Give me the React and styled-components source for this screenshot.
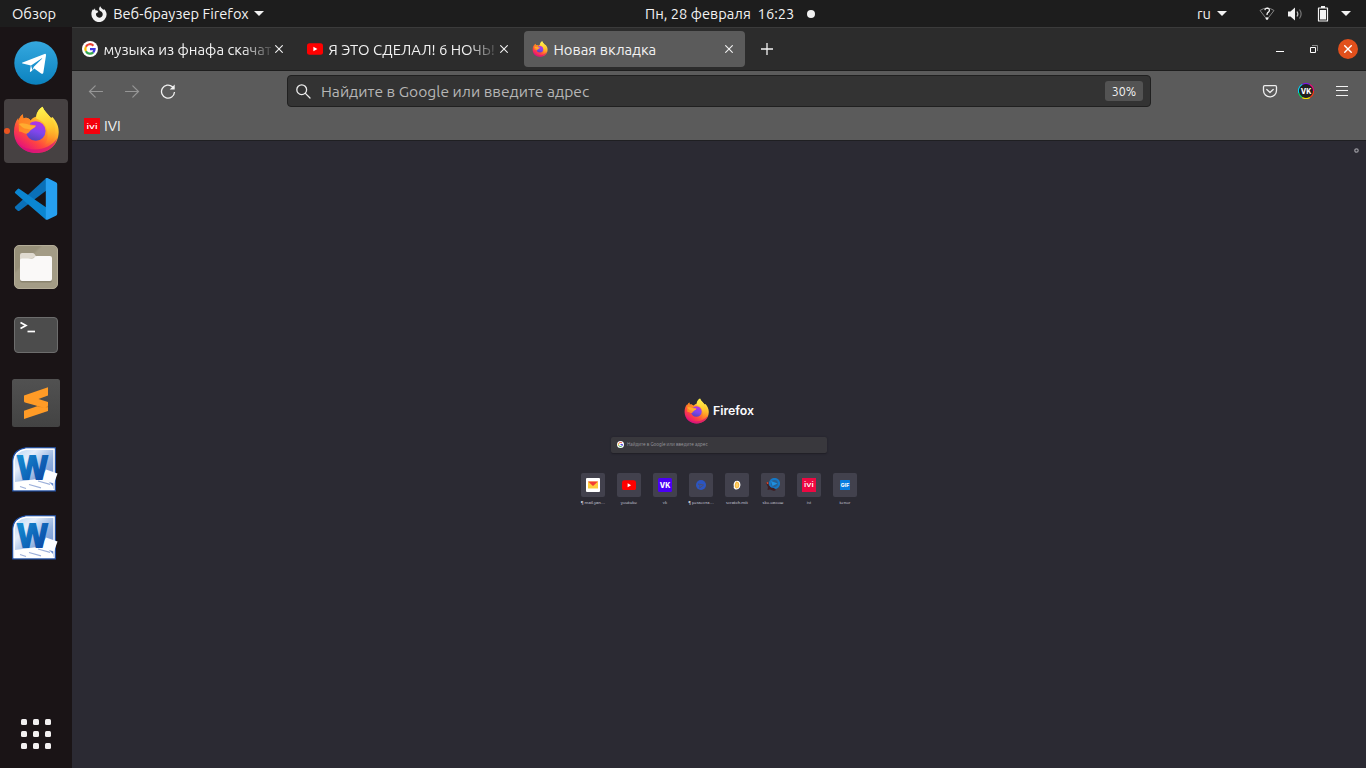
import React from "react";
import styled, { createGlobalStyle } from "styled-components";

const Global = createGlobalStyle`
  * { box-sizing: border-box; }
  html, body { margin: 0; padding: 0; overflow: hidden; }
  body { font-family: Ubuntu, "Noto Sans", "Open Sans", sans-serif; color: #f2f2f2; background: #2b2a33; }
  svg { display: block; flex: none; }
`;

const Screen = styled.div`
  width: 1366px;
  height: 768px;
  display: flex;
  flex-direction: column;
  overflow: hidden;
`;
const Label = styled.span`
  display: block;
  white-space: pre;
  flex: none;
  font-family: ${(p) => p.$font || "inherit"};
  font-size: ${(p) => p.$size || 14.67}px;
  font-weight: ${(p) => p.$weight || 400};
  letter-spacing: ${(p) => p.$track || 0}px;
  color: ${(p) => p.$color || "#f2f2f2"};
  line-height: 20px;
`;

/* ---------- top panel ---------- */
const TopBar = styled.header`
  height: 27px;
  flex: none;
  background: #1d1d1d;
  display: grid;
  grid-template-columns: 645px 1fr auto;
  align-items: center;
`;
const PanelGroup = styled.div`
  display: flex;
  align-items: center;
  height: ${(p) => p.$height || 27}px;
  padding-left: ${(p) => p.$left || 0}px;
  padding-right: ${(p) => p.$right || 0}px;
  gap: ${(p) => p.$gap || 0}px;
`;
const Caret = styled.i`
  width: 0;
  height: 0;
  border: 5px solid transparent;
  border-top-color: #f2f2f2;
  border-bottom: 0;
  margin-left: ${(p) => p.$ml || 0}px;
`;
const NoticeDot = styled.i`
  width: 8px;
  height: 8px;
  border-radius: 50%;
  background: #f2f2f2;
`;

/* ---------- dock ---------- */
const Main = styled.div`
  flex: 1;
  display: flex;
  min-height: 0;
`;
const Dock = styled.nav`
  width: 72px;
  flex: none;
  background: #1a1416;
  display: flex;
  flex-direction: column;
  align-items: center;
  gap: 4px;
  padding: 4px 0 2px;
`;
const DockItem = styled.div`
  width: 64px;
  height: 64px;
  flex: none;
  border-radius: 4px;
  position: relative;
  display: flex;
  align-items: center;
  justify-content: center;
  background: ${(p) => (p.$active ? "#464142" : "transparent")};
  margin-top: ${(p) => (p.$last ? "auto" : 0)};
  padding: ${(p) => p.$pad || 0};
`;
const RunningDot = styled.i`
  position: absolute;
  left: 0;
  top: 29px;
  width: 6px;
  height: 6px;
  border-radius: 50%;
  background: #e95420;
`;
const AppGrid = styled.div`
  display: grid;
  grid-template-columns: repeat(3, 6px);
  gap: 6px;
`;
const AppDot = styled.i`
  height: 6px;
  border-radius: 1.5px;
  background: #f2f0f0;
`;

/* ---------- browser ---------- */
const Browser = styled.main`
  flex: 1;
  min-width: 0;
  display: flex;
  flex-direction: column;
`;
const TabStrip = styled.div`
  height: 44px;
  flex: none;
  background: #2c2c2c;
  border-top: 1px solid #3b3b3b;
  border-bottom: 1px solid #1e1e1e;
  display: flex;
  align-items: center;
  padding: 0 8px 0 2px;
  gap: 4px;
`;
const Tab = styled.div`
  width: 221px;
  height: 36px;
  border-radius: 4px;
  background: ${(p) => (p.$active ? "#5b5b5b" : "transparent")};
  display: flex;
  align-items: center;
  padding: 0 12px 0 8px;
`;
const TabTitle = styled.div`
  width: 167px;
  margin: 1px 0 0 5.5px;
  overflow: hidden;
  ${(p) => p.$fade && "mask-image: linear-gradient(to right, #000 138px, transparent 172px);"}
`;
const TabClose = styled.div`
  flex: 1;
  display: flex;
  justify-content: flex-end;
`;
const NewTab = styled.div`
  width: 36px;
  display: flex;
  justify-content: center;
`;
const WindowControls = styled.div`
  margin-left: auto;
  display: flex;
  align-items: center;
`;
const CloseWindow = styled.div`
  width: 20px;
  height: 20px;
  border-radius: 50%;
  background: #e2501c;
  display: flex;
  align-items: center;
  justify-content: center;
  margin-left: 20px;
`;
const Chrome = styled.div`
  height: 70px;
  flex: none;
  background: #5b5b5b;
  border-bottom: 1px solid #1f1f22;
`;
const NavBar = styled.div`
  height: 40px;
  display: flex;
  align-items: center;
  padding: 0 16px;
`;
const NavButtons = styled.div`
  display: flex;
  gap: 20px;
  width: 199px;
`;
const UrlBar = styled.div`
  width: 864px;
  height: 32px;
  border: 1px solid #202020;
  border-radius: 4px;
  background: #333333;
  display: flex;
  align-items: center;
  padding: 0 7px 0 8px;
`;
const UrlText = styled.div`
  flex: 1;
  padding: 0 0 1px 10px;
`;
const Zoom = styled.div`
  width: 38px;
  height: 20px;
  border-radius: 3px;
  background: #535353;
  display: flex;
  justify-content: center;
`;
const Extensions = styled.div`
  margin-left: auto;
  display: flex;
  align-items: center;
  gap: 20px;
`;
const Bookmarks = styled.div`
  height: 29px;
  display: flex;
  align-items: center;
  padding: 1px 0 0 12px;
  gap: 4px;
`;

/* ---------- new tab page ---------- */
const Page = styled.section`
  flex: 1;
  background: #2b2a33;
  display: flex;
  flex-direction: column;
  align-items: center;
`;
const Settings = styled.div`
  align-self: flex-end;
  height: 257px;
  padding: 7px 7px 0 0;
`;
const Brand = styled.div`
  height: 26px;
  display: flex;
  align-items: center;
  gap: 4px;
`;
const SearchBox = styled.div`
  width: 216px;
  height: 16px;
  margin-top: 13px;
  border-radius: 2px;
  background: #39383d;
  box-shadow: 0 0.5px 1.5px #1f1e26;
  display: flex;
  align-items: center;
  gap: 3px;
  padding: 0 0 1px 6px;
`;
const Sites = styled.div`
  margin-top: 20px;
  display: flex;
`;
const Site = styled.div`
  width: 36px;
  display: flex;
  flex-direction: column;
  align-items: center;
`;
const SiteTile = styled.div`
  width: 24px;
  height: 24px;
  border-radius: 2px;
  background: #42414d;
  display: flex;
  align-items: center;
  justify-content: center;
`;
const SiteName = styled.div`
  margin-top: 3px;
  height: 5px;
  font-size: 4.4px;
  line-height: 5px;
  white-space: pre;
  color: #dcdce0;
`;

/* ---------- icons ---------- */
const Firefox = ({ w = 46, h = 48, id }) => (
  <svg width={w} height={h} viewBox="0 0 46 48">
    <defs>
      <linearGradient id={id + "a"} x1=".85" y1=".1" x2=".25" y2=".95">
        <stop offset="0" stopColor="#fff44f" />
        <stop offset=".28" stopColor="#ffc02f" />
        <stop offset=".48" stopColor="#ff8a26" />
        <stop offset=".72" stopColor="#ff4640" />
        <stop offset="1" stopColor="#e5107c" />
      </linearGradient>
      <linearGradient id={id + "b"} x1=".6" y1="0" x2=".3" y2="1">
        <stop offset="0" stopColor="#b833e1" />
        <stop offset=".5" stopColor="#8146ee" />
        <stop offset="1" stopColor="#5143b8" />
      </linearGradient>
      <linearGradient id={id + "c"} x1=".5" y1="0" x2=".6" y2="1">
        <stop offset="0" stopColor="#fff44f" />
        <stop offset=".55" stopColor="#ffc72d" />
        <stop offset="1" stopColor="#ff8a1e" stopOpacity=".1" />
      </linearGradient>
      <linearGradient id={id + "d"} x1="0" y1="0" x2="1" y2="1">
        <stop offset="0" stopColor="#ff7c20" />
        <stop offset="1" stopColor="#ff962d" />
      </linearGradient>
    </defs>
    <path fill={`url(#${id}a)`} d="M29.500.7C31 5 35 8 38 12l1.500-1c4 4.500 6.200 9 6.200 15C45.500 38.500 36 47 23.300 47S1 38 1 26c0-6 1.500-10.500 4.200-14l.4 2.500c1-3 2.300-4.700 4.200-6.200l.6 4.300C13 11 16 12 17.500 14.500c2-2.700 4-3.600 6-4C24 6 26 3 29.500.7z" />
    <path fill="#d4127c" opacity=".7" d="M2 31c2.500 9 11 12.500 20 12.500S40 39 44 32.500C41.500 42 33.500 47 23.300 47S4.500 41 2 31z" />
    <circle cx="22.800" cy="25" r="9.800" fill={`url(#${id}b)`} />
    <path fill={`url(#${id}c)`} d="M29.500.7C31 5 35 8 38 12c3.500 5 5 10 3.500 16-1.500 5.500-5 9.500-10 11 3-4 4-9 2.500-15-1-5-4-9-10.700-11.500C22.500 7 26 3 29.500.7z" />
    <path fill={`url(#${id}d)`} d="M5.500 14.500c1-3 2.300-4.700 4.200-6.200l.6 4.300c2.700-1.600 5.200-.6 7.200 1.900 0 1.500-.5 3-.5 4 1.500.6 4.500.7 5.800 1-.5 2.300-3.500 2.800-5 4.500-1 1-1.500 2.500-3.800 3.500-2 1-5-2-8-2z" />
    <path fill="#ffac30" d="M6 18c2.500-1.400 7-.5 10.500 1 1.800.7 5 .5 6.300.8-.8 2-3.300 2.500-5 3.900-2.500-1-6-.5-8-2.200C8.500 20.300 7 19.500 6 18z" />
  </svg>
);

const Telegram = () => (
  <svg width="44" height="44" viewBox="0 0 44 44">
    <defs>
      <linearGradient id="tg" x1="0" y1="0" x2="0" y2="1">
        <stop offset="0" stopColor="#35a8df" />
        <stop offset="1" stopColor="#0b82bf" />
      </linearGradient>
    </defs>
    <circle cx="22" cy="22" r="21.700" fill="url(#tg)" />
    <path fill="#fff" d="M8.600 21.500 30.500 13q1.800-.6 1.500 1.500l-2.600 16.800c-.2 1.600-1.200 1.900-2.300 1.100l-6.800-5-3.200 3.100c-.8.800-1.400.6-1.200-.6l1-5.300-8.200-2.200c-1-.3-1-.7-.1-.9z" />
    <path fill="#1a92cf" d="m17 24.600 10.500-7.200c.6-.4 1-.1.500.4l-8.200 8-1.300 3.500z" />
  </svg>
);

const VSCode = () => (
  <svg width="44" height="44" viewBox="0 0 44 44">
    <path fill="#0a70b8" d="M1.300 29.500 32 1.200 33 13 5.500 33.700q-1 .6-1.800 0L1.300 31.500q-1-1 0-2z" />
    <path fill="#0b86d1" d="M1.300 14.500 3.700 12q.9-.8 1.800 0L33 31l-1 11.700L1.300 16.300q-1-.9 0-1.800z" />
    <path fill="#26a0f0" d="M31.800 1.300q.7-.6 1.700-.2l8.400 4.200q1.300.6 1.300 2v29.400q0 1.400-1.300 2l-8.400 4q-1 .4-1.700-.2z" />
  </svg>
);

const Files = () => (
  <svg width="44" height="44" viewBox="0 0 44 44">
    <defs>
      <linearGradient id="fl" x1="0" y1="0" x2="1" y2="1">
        <stop offset=".3" stopColor="#979079" />
        <stop offset=".34" stopColor="#a39c86" />
      </linearGradient>
    </defs>
    <rect x=".5" y=".5" width="43" height="43" rx="4.500" fill="url(#fl)" stroke="#b4ad98" />
    <path fill="#6f6956" opacity=".5" d="M6 16h32v19.500q0 2-2 2H8q-2 0-2-2z" />
    <path fill="#dfdad0" d="M6 16v-6q0-2 2-2h10.500q1.200 0 2 1l2 3z" />
    <path fill="#faf9f8" d="M6 15q0-1.500 2-1.500h9.500q2 0 3-1.300.8-1.200 2.500-1.200h13q2 0 2 2v21q0 2-2 2H8q-2 0-2-2z" />
  </svg>
);

const Terminal = () => (
  <svg width="44" height="36" viewBox="0 0 44 36">
    <rect x=".5" y=".5" width="43" height="35" rx="3.500" fill="#4c4c4c" stroke="#6d6d6d" />
    <path d="m6.500 5.500 5.500 3-5.500 3" fill="none" stroke="#fff" strokeWidth="1.700" />
    <path d="M13.500 14.500H21" stroke="#fff" strokeWidth="1.700" />
  </svg>
);

const Sublime = () => (
  <svg width="48" height="48" viewBox="0 0 48 48">
    <defs>
      <linearGradient id="sb" x1="0" y1="0" x2="0" y2="1">
        <stop offset="0" stopColor="#515151" />
        <stop offset="1" stopColor="#434343" />
      </linearGradient>
    </defs>
    <rect width="48" height="48" rx="2.500" fill="url(#sb)" />
    <path fill="#ff9b26" d="m12 31.800 24-8.300V32l-24 8z" />
    <path fill="#e0821b" d="m20 21 16 4v3.500l-10-.5z" />
    <path fill="#ff9b26" d="M12 16.500 36 8.300v8.200L26.500 20l9.500 3v3.500l-3 2.500-20-5.500q-1-.3-1-1.500z" />
  </svg>
);

const Word = ({ id }) => (
  <svg width="46" height="46" viewBox="0 0 46 46">
    <defs>
      <linearGradient id={id + "p"} x1="0" y1="0" x2="1" y2="1">
        <stop offset="0" stopColor="#b4d2f2" />
        <stop offset=".3" stopColor="#e4eefb" />
        <stop offset=".6" stopColor="#8eaede" />
        <stop offset="1" stopColor="#5b80cc" />
      </linearGradient>
      <linearGradient id={id + "w"} x1="0" y1="0" x2="1" y2="1">
        <stop offset="0" stopColor="#1597d8" />
        <stop offset="1" stopColor="#0a3a9d" />
      </linearGradient>
    </defs>
    <path d="M14 .8h29.300v43H.8V14Q.8 3 14 .8z" fill={`url(#${id}p)`} stroke="#1f50a8" strokeWidth="1.200" />
    <path d="M14 2.200h28v40.300H2.200V14Q3 4 14 2.200z" fill="none" stroke="#fff" strokeWidth="1.400" />
    <path d="m3 35 30-4 8 8v3.500H3z" fill="#fff" />
    <path d="m34 22.500 11.500 4-3.500 10-14-4z" fill="#fbfcff" />
    <path d="m26 34 12 3.300M17 37.500l12 3.300M8 39.500l6 2" stroke="#9db0da" strokeWidth="1.200" />
    <text x="5.500" y="32.300" fontFamily="Liberation Sans, sans-serif" fontWeight="700" fontSize="34" textLength="30" lengthAdjust="spacingAndGlyphs" fill={`url(#${id}w)`} stroke={`url(#${id}w)`} strokeWidth="1.800">W</text>
  </svg>
);

const Google = ({ size = 16 }) => (
  <svg width={size} height={size} viewBox="0 0 16 16">
    <circle cx="8" cy="8" r="8" fill="#fff" />
    <g fill="none" strokeWidth="2.200">
      <path stroke="#ea4335" d="M3.900 5.800a4.600 4.600 0 0 1 7.500-1.100" />
      <path stroke="#fbbc05" d="M3.900 10.200a4.600 4.600 0 0 1 0-4.400" />
      <path stroke="#34a853" d="M11.200 11.400a4.600 4.600 0 0 1-7.300-1.200" />
      <path stroke="#4338e0" d="M8 8.100H12.600a4.600 4.600 0 0 1-1.400 3.300" />
    </g>
  </svg>
);

const YouTube = ({ w = 16, h = 12 }) => (
  <svg width={w} height={h} viewBox="0 0 16 12">
    <rect y=".3" width="16" height="11.400" rx="2.500" fill="#f00" />
    <path d="m6.400 3.700 4 2.300-4 2.300z" fill="#fff" />
  </svg>
);

const Ivi = ({ size = 16, color = "#f4000c" }) => (
  <svg width={size} height={size} viewBox="0 0 16 16">
    <rect width="16" height="16" fill={color} />
    <text x="2.400" y="10.600" fontFamily="Inter, sans-serif" fontWeight="500" fontSize="6.400" textLength="11.200" lengthAdjust="spacingAndGlyphs" fill="#fff">ivi</text>
  </svg>
);

const Cross = ({ w = 1.100, color = "#f2f2f2" }) => (
  <svg width="8" height="8" viewBox="0 0 8 8">
    <path d="M.3.3l7.400 7.400M7.700.3.300 7.700" stroke={color} strokeWidth={w} />
  </svg>
);

const Arrow = ({ flip }) => (
  <svg width="16" height="16" viewBox="0 0 16 16" fill="none" stroke="#969696" strokeWidth="1.200" strokeLinecap="round">
    <path d={flip ? "M1.500 8.500h13M8.800 2.800l5.700 5.700-5.700 5.700" : "M14.500 8.500h-13M7.200 2.800 1.500 8.500l5.700 5.700"} />
  </svg>
);

const DOCK = [
  { icon: <Telegram /> },
  { icon: <Firefox id="fd" />, active: true, pad: "0 0 2px" },
  { icon: <VSCode /> },
  { icon: <Files /> },
  { icon: <Terminal /> },
  { icon: <Sublime /> },
  { icon: <Word id="w1" />, pad: "0 2px 2px 0" },
  { icon: <Word id="w2" />, pad: "0 2px 2px 0" },
];

const TABS = [
  { icon: <Google />, title: "музыка из фнафа скачать", fade: true },
  { icon: <YouTube />, title: "Я ЭТО СДЕЛАЛ! 6 НОЧЬ!", fade: true },
  { icon: <Firefox w={16} h={16} id="ft" />, title: "Новая вкладка", active: true },
];

const SITES = [
  ["¶ mail.yan…", <svg width="14" height="14" viewBox="0 0 14 14"><rect width="14" height="14" rx="1" fill="#fff" /><path fill="#ffcc3d" d="M2 3.500h10v7H2z" /><path fill="#f43c35" d="M2 3.500h10L7 8z" /></svg>],
  ["youtube", <YouTube w={14} h={10.500} />],
  ["vk", <svg width="14" height="14" viewBox="0 0 14 14"><rect width="14" height="14" rx="1.500" fill="#4b00f5" /><text x="1.800" y="9.600" fontFamily="Inter, sans-serif" fontWeight="800" fontSize="7" textLength="10.500" lengthAdjust="spacingAndGlyphs" fill="#fff">VK</text></svg>],
  ["¶ ремонта…", <svg width="10" height="10" viewBox="0 0 10 10"><circle cx="5" cy="5" r="5" fill="#2c55c0" /><path d="m2 4 5.500 1L3.700 8l.2-2.500z" fill="none" stroke="#4a5072" strokeWidth="1" /></svg>],
  ["scratch.mit", <svg width="8" height="10" viewBox="0 0 8 10"><path d="M2.500 1Q6 0 7 2.500q1 2-.2 5Q5 10 2 9.200 0 8 .8 6.500 0 3 2.500 1z" fill="#fff" /><path d="M3.500 2.200q2 0 2.200 2Q6 8 3.500 7.800 1.800 7.500 2.500 4z" fill="#ffd070" stroke="#f5b73a" strokeWidth="1.200" /></svg>],
  ["sko.овсош", <svg width="14" height="14" viewBox="0 0 14 14"><circle cx="8.500" cy="5.500" r="4.500" fill="#2a5f91" stroke="#1577c5" strokeWidth="2.200" /><path d="m5 3 6.500 2.500L6.500 8z" fill="#1e90e0" /><path d="m0 5 2-1 .5 3L5 9.500 8 10l2 2-2 1-4-1.500L1.500 12 2 9z" fill="#3f1f24" /><path d="M.5 4.500 2 4l.5 1.500-1.500.8z" fill="#e04629" /></svg>],
  ["ivi", <Ivi size={14} color="#ed0842" />],
  ["tenor", <svg width="10" height="10" viewBox="0 0 10 10"><rect width="10" height="10" rx=".6" fill="#087de0" /><text x=".8" y="7" fontFamily="Inter, sans-serif" fontWeight="700" fontSize="5.300" textLength="8.400" lengthAdjust="spacingAndGlyphs" fill="#fff">GIF</text></svg>],
];

export default function App() {
  return (
    <Screen>
      <Global />
      <TopBar>
        <PanelGroup $left={12}>
          <Label>Обзор</Label>
          <PanelGroup $left={35} $height={25}>
            <svg width="16" height="16" viewBox="0 0 16 16">
              <path fill="#f2f2f2" d="M9.300.3c.4 1.700 2 2.200 3.200 3.600l.5-.8c1.800 1.700 2.600 3.600 2.600 5.400a7.500 7.500 0 0 1-15.200 0C.3 6 1 4.300 2.200 3l.3 1.200L4 2.200l.3 2 2 .2 1 1.600L5 7.500c-.3 2.400 1.200 4.200 3.200 4.200 2.200 0 3.700-1.700 3.500-3.900-.1-1.400-1.300-2.500-2.500-2.900C7.500 4 8 1.500 9.300.3z" />
            </svg>
          </PanelGroup>
          <PanelGroup $left={6}>
            <Label>Веб-браузер Firefox</Label>
            <Caret $ml={5} />
          </PanelGroup>
        </PanelGroup>
        <PanelGroup $gap={13}>
          <Label $track={0.03}>Пн, 28 февраля  16:23</Label>
          <NoticeDot />
        </PanelGroup>
        <PanelGroup $right={15}>
          <Label>ru</Label>
          <Caret $ml={6} />
          <PanelGroup $left={32} $gap={12}>
            <svg width="16" height="14" viewBox="0 0 16 14" fill="none">
              <path d="M1 3.500Q8-1.500 15 3.500L8 12.500z" stroke="#858585" strokeWidth="1" />
              <path d="M5.800 3.200q.4-2 2.400-2 2.400.2 2.200 2.300-.1 1.300-1.600 2.100Q8 6.300 8 8" stroke="#f2f2f2" strokeWidth="1.300" />
              <circle cx="8" cy="11.500" r="1.300" fill="#f2f2f2" />
            </svg>
            <svg width="16" height="14" viewBox="0 0 16 14" fill="none">
              <path d="M1 4.500h2.500L8 .5v13l-4.500-4H1z" fill="#f2f2f2" />
              <path d="M10 4.500q1.700 2.500 0 5" stroke="#c0c0c0" strokeWidth="1.200" />
              <path d="M12.500 2.500q3.200 4.500 0 9" stroke="#777" strokeWidth="1.200" />
            </svg>
            <svg width="16" height="16" viewBox="0 0 16 16">
              <path d="M3.500 2h9v13h-9z" fill="none" stroke="#f2f2f2" strokeWidth="1.200" strokeLinejoin="round" />
              <path d="M5 4h6v9.500H5zM6 0h4v2H6z" fill="#f2f2f2" />
            </svg>
          </PanelGroup>
          <Caret $ml={10} />
        </PanelGroup>
      </TopBar>
      <Main>
        <Dock>
          {DOCK.map(({ icon, active, pad }, i) => (
            <DockItem key={i} $active={active} $pad={pad}>
              {active && <RunningDot />}
              {icon}
            </DockItem>
          ))}
          <DockItem $last>
            <AppGrid>
              {Array.from({ length: 9 }, (_, i) => <AppDot key={i} />)}
            </AppGrid>
          </DockItem>
        </Dock>
        <Browser>
          <TabStrip>
            {TABS.map((t) => (
              <Tab key={t.title} $active={t.active}>
                {t.icon}
                <TabTitle $fade={t.fade}><Label $size={14.85}>{t.title}</Label></TabTitle>
                <TabClose><Cross /></TabClose>
              </Tab>
            ))}
            <NewTab>
              <svg width="12" height="12" viewBox="0 0 12 12"><path d="M6 0v12M0 6h12" stroke="#f2f2f2" strokeWidth="1.300" /></svg>
            </NewTab>
            <WindowControls>
              <svg width="8" height="8" viewBox="0 0 8 8"><path d="M0 6.500h8" stroke="#fff" /></svg>
              <svg width="34" height="8" viewBox="0 0 34 8" fill="none">
                <path d="M26.500 2.500h5v5h-5z" stroke="#fff" />
                <path d="M28 .5h5.500V6" stroke="#8c8c8c" />
              </svg>
              <CloseWindow><Cross w={1.400} color="#fff" /></CloseWindow>
            </WindowControls>
          </TabStrip>
          <Chrome>
            <NavBar>
              <NavButtons>
                <Arrow />
                <Arrow flip />
                <svg width="16" height="16" viewBox="0 0 16 16" fill="none">
                  <path d="M14.500 9a6.500 6.500 0 1 1-2.100-5.200l1.600 1.500" stroke="#f2f2f2" strokeWidth="1.300" />
                  <path d="M14.700 1.500v5h-5z" fill="#f2f2f2" />
                </svg>
              </NavButtons>
              <UrlBar>
                <svg width="15" height="15" viewBox="0 0 15 15" fill="none" stroke="#ededed" strokeWidth="1.300" strokeLinecap="round">
                  <circle cx="5.700" cy="5.700" r="4.900" />
                  <path d="m9.400 9.400 4.600 4.600" />
                </svg>
                <UrlText><Label $size={15.6} $color="#b6b6b6">Найдите в Google или введите адрес</Label></UrlText>
                <Zoom><Label $size={12.4}>30%</Label></Zoom>
              </UrlBar>
              <Extensions>
                <svg width="16" height="16" viewBox="0 0 16 16" fill="none" stroke="#ededed" strokeWidth="1.300" strokeLinecap="round" strokeLinejoin="round">
                  <path d="M2.700 2.700h10.600q1.200 0 1.200 1.200v3.500a6.500 6.500 0 0 1-13 0V3.900q0-1.200 1.200-1.200z" />
                  <path d="m4.800 6.500 3.200 3 3.200-3" />
                </svg>
                <svg width="16" height="16" viewBox="0 0 16 16">
                  <circle cx="8" cy="8" r="7.500" fill="#202020" />
                  <g fill="none" strokeWidth="1.100">
                    <path stroke="#7c12e8" d="M4.200 1.500a7.500 7.500 0 0 1 7.600 0" />
                    <path stroke="#f00080" d="M11.800 1.500a7.500 7.500 0 0 1 3.700 6.500" />
                    <path stroke="#ff3a10" d="M15.500 8a7.500 7.500 0 0 1-3.700 6.500" />
                    <path stroke="#f5e400" d="M11.800 14.500a7.500 7.500 0 0 1-7.600 0" />
                    <path stroke="#00d65a" d="M4.200 14.500A7.500 7.500 0 0 1 .8 10" />
                    <path stroke="#00d5f5" d="M.8 10a7.500 7.500 0 0 1 3.400-8.500" />
                  </g>
                  <text x="2.800" y="10.600" fontFamily="Inter, sans-serif" fontWeight="800" fontSize="7.300" textLength="10.600" lengthAdjust="spacingAndGlyphs" fill="#fff">VK</text>
                </svg>
                <svg width="16" height="16" viewBox="0 0 16 16"><path d="M2 3.500h12M2 7.500h12M2 12.500h12" stroke="#f2f2f2" strokeWidth="1.200" /></svg>
              </Extensions>
            </NavBar>
            <Bookmarks>
              <Ivi />
              <Label>IVI</Label>
            </Bookmarks>
          </Chrome>
          <Page>
            <Settings>
              <svg width="5" height="5" viewBox="0 0 5 5"><circle cx="2.500" cy="2.500" r="1.700" fill="none" stroke="#99989f" strokeWidth="1.200" /></svg>
            </Settings>
            <Brand>
              <Firefox w={25} h={26} id="fb" />
              <Label $font="Inter, sans-serif" $size={12.300} $weight={600} $color="#fbfbfe">Firefox</Label>
            </Brand>
            <SearchBox>
              <Google size={7} />
              <Label $size={4.7} $color="#9a999f">Найдите в Google или введите адрес</Label>
            </SearchBox>
            <Sites>
              {SITES.map(([name, icon]) => (
                <Site key={name}>
                  <SiteTile>{icon}</SiteTile>
                  <SiteName>{name}</SiteName>
                </Site>
              ))}
            </Sites>
          </Page>
        </Browser>
      </Main>
    </Screen>
  );
}
